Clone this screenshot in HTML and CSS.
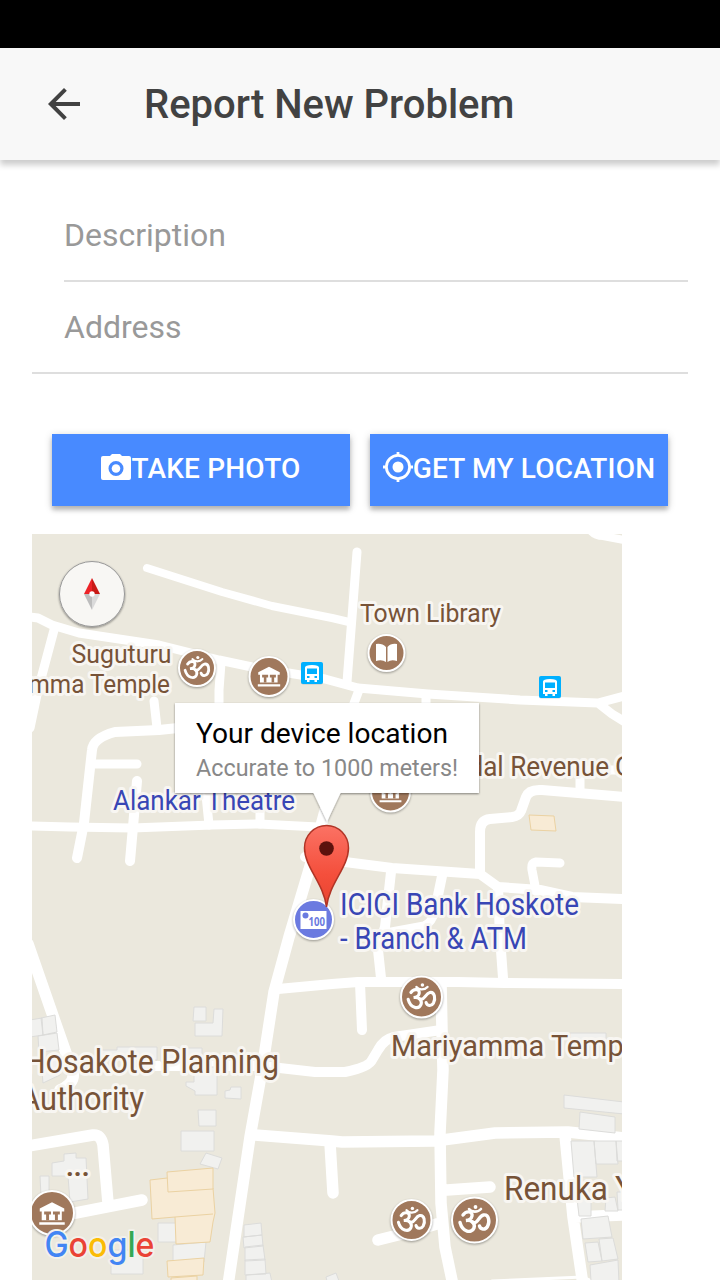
FILE: index.html
```html
<!DOCTYPE html>
<html lang="en">
<head>
<meta charset="utf-8">
<title>Report New Problem</title>
<link rel="stylesheet" href="styles.css">
</head>
<body>
<div class="status-bar"></div>
<header class="toolbar">
  <svg class="back" viewBox="0 0 32 32"><path d="M32 14H7.7L18.8 2.8 16 0 0 16l16 16 2.8-2.8L7.7 18H32z"/></svg>
  <h1 class="title">Report New Problem</h1>
</header>
<main class="content">
  <form class="fields">
    <label class="field field-inset"><input class="input" placeholder="Description"></label>
    <label class="field"><input class="input" placeholder="Address"></label>
  </form>
  <div class="actions">
    <button class="button">
      <svg class="camera" viewBox="0 0 30 26"><path fill-rule="evenodd" d="M11 0h8l2 2h7a2 2 0 0 1 2 2v20a2 2 0 0 1-2 2H2a2 2 0 0 1-2-2V4a2 2 0 0 1 2-2h7zM15 7a7.5 7.5 0 1 0 0 15 7.5 7.5 0 0 0 0-15z"/><circle cx="15" cy="14.5" r="4.3"/></svg><span>TAKE PHOTO</span>
    </button>
    <button class="button">
      <svg class="locate" viewBox="0 0 30 30"><circle cx="15" cy="15" r="5.5"/><path d="M15 0v4M15 26v4M0 15h4M26 15h4" stroke="#fff" stroke-width="2.8"/><circle cx="15" cy="15" r="11.6" fill="none" stroke="#fff" stroke-width="2.8"/></svg><span>GET MY LOCATION</span>
    </button>
  </div>
  <svg class="map" viewBox="32 534 590 746">
    <defs>
      <linearGradient id="pinFill" x1="0" y1="0" x2="0" y2="1"><stop offset="0" stop-color="#fb7264"/><stop offset=".6" stop-color="#f44f3c"/><stop offset="1" stop-color="#e8442f"/></linearGradient>
      <filter id="soft" x="-30%" y="-30%" width="160%" height="160%"><feDropShadow dx="0" dy="1" stdDeviation="1.3" flood-color="#000" flood-opacity=".45"/></filter>
      <g id="om" fill="none" stroke="#fff" stroke-width="3.400" stroke-linecap="round">
        <path d="M-11.5-6C-8-11-1.5-9.500-2.500-5C-3-2-6-.5-8.500-.5C-3-1.500 1 2.500-.5 7C-3 13-12 11-14.500 1.500"/>
        <path d="M-2 1C3 4 4-5 9-6C14.500-7 15.500 1 13 5.500C10.500 9.500 6 8.500 5 5"/>
        <path d="M-5.500-12C-3-8.500 3.500-8.500 6.500-12" stroke-width="2.600"/>
        <circle cx="1" cy="-14" r="1.900" fill="#fff" stroke="none"/>
      </g>
      <g id="museum" fill="#fff">
        <path d="M-12.500-5.500 0-12 12.500-5.500v3H10V6.500H-10.500V-2.500h-2zM-13 8.500h26V11h-26z"/>
        <path fill="#a0785c" d="M-8-2.500h7v3H-3V6.500h-3V.5h-2zM1-2.500h7v3H6V6.500H3V.5H1z"/>
      </g>
      <g id="bus">
        <rect x="-11" y="-10.500" width="22" height="22" rx="2" fill="#000" opacity=".15"/>
        <rect x="-11" y="-11" width="22" height="22" rx="2" fill="#00b0ff"/>
        <path fill="#fff" d="M-7 7V-5.500Q-7-8 0-8T7-5.500V7H5V9H2.500V7H-2.500V9H-5V7z"/>
        <path fill="#00b0ff" d="M-5-4.500H5V1H-5zM-5 3h2.500v2H-5zM2.500 3H5v2H2.500z"/>
      </g>
    </defs>
    <rect x="32" y="534" width="590" height="746" fill="#ebe8dd"/>
    <g class="road">
      <g stroke-width="8">
        <path d="M147 568 222 592 272 606 332 618 349 622"/>
        <path d="M590 530Q595 536 603 536L624 540"/>
        <path d="M592 1281 583 1277 492 1281" stroke-width="3"/>
      </g>
      <g stroke-width="9">
        <path d="M30 617 38 618 52 625 79 633 159 645 219 660 252 667 325 679 358 688 428 694 520 700 598 703 624 696M598 703 612 714 625 722"/>
        <path d="M357 552 347 682M54 630 38 690 30 728"/>
        <path d="M221 663 219 690 219 710 206 795 209 825M154 701 157 728M95 764H137M260 805V824M359 690 353 706M426 695V706"/>
        <path d="M28 826 70 827 132 828 212 825 259 824 318 827"/>
        <path d="M580 790V776Q581 770 590 770H624M560 863 536 862Q531 863 532 870L536 891"/>
        <path d="M435 910Q432 923 424 926L386 933"/>
      </g>
      <g stroke-width="10">
        <path d="M178 728 159 730 115 732Q93 738 92 750L84 823 77 858"/>
        <path d="M137 781 130 861M391 872 385 927 378 950 381 978M442 876 435 910"/>
        <path d="M305 857 345 862 392 868 480 874 498 887 540 890 572 897 624 899"/>
        <path d="M624 797 578 793 542 790Q529 789 526 797L521 811Q519 816 512 817L490 819Q480 820 480 832V873"/>
        <path d="M498 887 500 937 503 978M278 989 332 984 358 982H458L505 983 624 984M360 983 362 1030"/>
        <path d="M441 1030 394 1037Q384 1039 378 1050L372 1060Q369 1067 345 1072H315L262 1066H145"/>
      </g>
      <g stroke-width="11.500">
        <path d="M328 800 309 870 289 937 274 992 262 1070 250 1137 228 1285"/>
        <path d="M28 944 52 1013 73 1073Q75 1083 60 1090"/>
        <path d="M28 1146 93 1135Q101 1134 103 1145L108 1203M45 1219 142 1200"/>
        <path d="M255 1135 332 1141 342 1142 435 1141 495 1133 568 1132 624 1138M330 1143 333 1193"/>
        <path d="M441 983 442 1030 443 1070 440 1133 441 1203 445 1247 453 1285M447 1190 490 1187M378 1240 410 1232 440 1223"/>
        <path d="M565 1135 573 1217 583 1285M575 1217 624 1215"/>
      </g>
    </g>
    <g class="building">
      <path d="M194 1007h12v14h-13zM214 1009h9l-1 27h-27v-13h18zM30 1020l12-2 1 17-13 2zM41 1018l14-3 2 17-14 3zM38 1036l19-3 2 17-20 2zM41 1060l17-3 2 18-17 8z"/>
      <path d="M99 1050h18v-3h40v13H99zM161 1048h41v14h-41zM194 1067h23v28h-22v-4l-9-5v-4h8zM225 1091l5-1 1-3h10v12l-16-1zM198 1110h18v16h-17zM181 1131h33v20h-33zM206 1153l16 5-4 11-18-5z"/>
      <path d="M52 1163l12-2v-7l12-1v5h10l2 41-18 3-2-26h-16zM40 1176h9v20h-8zM158 1223h19v19h-19zM173 1245l33-3-2 20h-31zM111 1250h32v24h-32z"/>
      <path d="M244 1225l17-2 1 12-18 2zM243 1237l19-2 1 11-19 2zM245 1247l18-2 2 15-20 1zM245 1260l20-1 1 15-21 1zM246 1275l24-2 2 10h-26zM326 1277l10-4 3 8h-12z"/>
      <path d="M564 1095l60 7v12l-60-6zM580 1112l35 5v16l-36-4zM571 1141h23l3 36h-23zM594 1141h22l2 23h-22zM616 1141h8v20h-7zM606 1198l9-1 3 14h-13zM617 1192h8v18h-7zM577 1198h14v18h-12zM581 1219l27-3 4 21-29 2zM585 1243l13-1 4 19-14 1zM599 1239l14-1 5 21-16 2zM590 1265l28-5 1 23-28-2zM570 1033h36v10h-36z"/>
    </g>
    <g class="commercial">
      <path d="M150 1180 167 1178 213 1188 215 1213 213 1222 210 1242 176 1244 175 1217 152 1219z"/>
      <path d="M167 1172 213 1168V1189L168 1192zM175 1217 213 1214M167 1261 204 1258 203 1275 168 1277zM171 1278 197 1276V1282H171zM529 815 554 816 556 831 531 830z"/>
    </g>

    <g class="badge">
      <circle cx="197" cy="668" r="18"/><circle cx="269" cy="676.500" r="19.500"/><circle cx="386.500" cy="653" r="18"/><circle cx="390.500" cy="792" r="19.500"/>
      <circle cx="421.500" cy="997" r="20.500"/><circle cx="52" cy="1213" r="22"/><circle cx="411.500" cy="1220" r="20"/><circle cx="474.500" cy="1220" r="22.500"/>
    </g>
    <circle class="badge bank" cx="313.500" cy="919.500" r="19.500"/>
    <use href="#om" transform="translate(197 669) scale(.82)"/>
    <use href="#om" transform="translate(421.500 998) scale(.92)"/>
    <use href="#om" transform="translate(411.500 1221) scale(.9)"/>
    <use href="#om" transform="translate(474.500 1221)"/>
    <use href="#museum" transform="translate(269 677) scale(.86)"/>
    <use href="#museum" transform="translate(390.500 793) scale(.84)"/>
    <use href="#museum" transform="translate(52 1214) scale(.98)"/>
    <path fill="#fff" d="M376 644Q382 643 386 647V662Q382 659 376 661zM387.500 647Q391 643 397 644V661Q391 659 387.500 662z"/>
    <use href="#bus" x="312" y="673"/><use href="#bus" x="550" y="687"/>
    <path fill="#fff" d="M300.500 911h26v18h-26z"/><circle cx="305.500" cy="915.500" r="3" fill="#6b7ae0"/>
    <text class="note" x="308.500" y="926" textLength="16.500" lengthAdjust="spacingAndGlyphs">100</text>

    <g class="label">
      <text x="71.500" y="663" font-size="25.500" textLength="100" lengthAdjust="spacingAndGlyphs">Suguturu</text>
      <text x="4" y="693" font-size="25.500" textLength="166" lengthAdjust="spacingAndGlyphs">yamma Temple</text>
      <text x="360" y="622" font-size="26.500" textLength="141" lengthAdjust="spacingAndGlyphs">Town Library</text>
      <text x="417" y="776" font-size="27.500" textLength="192" lengthAdjust="spacingAndGlyphs">Mandal Revenue</text><text x="615" y="776" font-size="27.500">O</text>
      <text x="391" y="1056" font-size="30" textLength="255" lengthAdjust="spacingAndGlyphs">Mariyamma Temple</text>
      <text x="24" y="1072.500" font-size="34" textLength="255" lengthAdjust="spacingAndGlyphs">Hosakote Planning</text>
      <text x="20" y="1109.500" font-size="34" textLength="124" lengthAdjust="spacingAndGlyphs">Authority</text>
      <text x="504" y="1200" font-size="34" textLength="104" lengthAdjust="spacingAndGlyphs">Renuka</text><text x="615" y="1200" font-size="34">Y</text>
      <text class="dots" x="66" y="1176" font-size="27">...</text>
    </g>
    <g class="label label-business">
      <text x="113" y="810" font-size="28" textLength="182" lengthAdjust="spacingAndGlyphs">Alankar Theatre</text>
      <text x="340" y="915" font-size="31" textLength="239" lengthAdjust="spacingAndGlyphs">ICICI Bank Hoskote</text>
      <text x="340" y="948.500" font-size="31" textLength="187" lengthAdjust="spacingAndGlyphs">- Branch &amp; ATM</text>
    </g>
    <path d="M326.500 907C324 884 304.500 867 304.500 848A22 22.500 0 0 1 348.500 848C348.500 867 329 884 326.500 907z" fill="url(#pinFill)" stroke="#b03426" stroke-width="1.500"/>
    <circle cx="326.500" cy="848.500" r="7.300" fill="#5b120d"/>
    <path filter="url(#soft)" fill="#fff" d="M175 703H479V793H340.500L327 821.500 313.500 793H175z"/>
    <text class="info-title" x="196" y="743" textLength="252" lengthAdjust="spacingAndGlyphs">Your device location</text>
    <text class="info-text" x="196" y="776" textLength="262" lengthAdjust="spacingAndGlyphs">Accurate to 1000 meters!</text>
    <circle cx="92" cy="594" r="32.500" fill="#f8f7f4" stroke="#999" stroke-width="1" filter="url(#soft)"/>
    <path fill="#ec2327" d="M92 578V594H84z"/><path fill="#c91a16" d="M92 578V594H100z"/>
    <path fill="#bdbdbd" d="M92 610V594H84z"/><path fill="#dadada" d="M92 610V594H100z"/><circle cx="92" cy="594" r="2.700" fill="#fff"/>
    <text class="brand" x="44.500" y="1256.500" textLength="110" lengthAdjust="spacingAndGlyphs"><tspan fill="#4285f4">G</tspan><tspan fill="#ea4335">o</tspan><tspan fill="#fbbc05">o</tspan><tspan fill="#4285f4">g</tspan><tspan fill="#34a853">l</tspan><tspan fill="#ea4335">e</tspan></text>
  </svg>
</main>
</body>
</html>
```

FILE: styles.css
```css
* { box-sizing: border-box; }
body {
  margin: 0;
  height: 1280px;
  overflow: hidden;
  background: #fff;
  font-family: Roboto, "Liberation Sans", sans-serif;
}
.status-bar { height: 48px; background: #000; }
.toolbar {
  height: 112px;
  padding-left: 48px;
  display: flex;
  align-items: center;
  gap: 64px;
  background: #f8f8f8;
  box-shadow: 0 5px 6px rgba(0, 0, 0, .2);
}
.back { width: 32px; height: 32px; fill: #424242; }
.title { margin: 0; font-size: 40px; font-weight: 500; color: #424242; }
.content { padding: 30px 32px 0; }
.fields { display: flex; flex-direction: column; }
.field {
  height: 92px;
  display: flex;
  padding-left: 32px;
  border-bottom: 2px solid #dedede;
}
.field-inset { margin-left: 32px; padding-left: 0; }
.input {
  flex: 1;
  height: 90px;
  padding: 0;
  border: 0;
  outline: 0;
  background: none;
  font: 400 32px Roboto, "Liberation Sans", sans-serif;
}
.input::placeholder { color: #999; }
.actions {
  display: grid;
  grid-template-columns: 298px 298px;
  gap: 20px;
  padding: 60px 20px 28px;
}
.button {
  height: 72px;
  padding: 0 0 3px;
  display: flex;
  align-items: center;
  justify-content: center;
  border: 0;
  background: #488aff;
  color: #fff;
  font: 500 28px Roboto, "Liberation Sans", sans-serif;
  letter-spacing: .2px;
  white-space: nowrap;
  box-shadow: 0 4px 4px rgba(0, 0, 0, .18), 0 2px 8px rgba(0, 0, 0, .2);
}
.camera { width: 30px; height: 26px; margin-top: -3px; fill: #fff; }
.locate { width: 30px; height: 30px; margin-top: -4px; fill: #fff; }
.map { display: block; width: 590px; height: 746px; overflow: hidden; }
.road { fill: none; stroke: #fff; stroke-linecap: round; stroke-linejoin: round; }
.building { fill: #f1f1ef; stroke: #dcdcda; stroke-width: 1; }
.commercial { fill: #f8ebd5; stroke: #ebd2a2; stroke-width: 1; }
.badge { fill: #a0785c; stroke: #fff; stroke-width: 2; filter: drop-shadow(0 1px 1px rgba(0, 0, 0, .35)); }
.bank { fill: #6b7ae0; }
.note { font: 700 11.5px "Noto Sans", sans-serif; fill: #6b7ae0; }
.label {
  fill: #775338;
  stroke: #f8f6f2;
  stroke-width: 6px;
  stroke-linejoin: round;
  paint-order: stroke;
}
.label-business { fill: #3846b5; }
.dots { font-weight: 700; }
.info-title { font-size: 28px; fill: #000; }
.info-text { font-size: 23.5px; fill: #888; }
.brand {
  font: 500 35px Inter, sans-serif;
  stroke: #f3f1ea;
  stroke-width: 4px;
  stroke-linejoin: round;
  paint-order: stroke;
}
```
